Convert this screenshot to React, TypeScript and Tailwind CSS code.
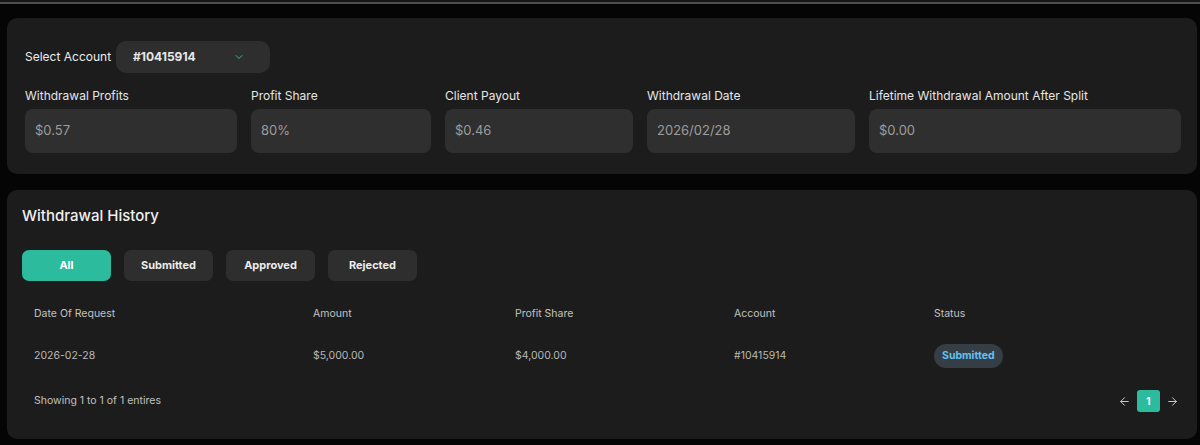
import { ChevronDown, ArrowLeft, ArrowRight } from 'lucide-react';

const fields = [
  { label: 'Withdrawal Profits', value: '$0.57' },
  { label: 'Profit Share', value: '80%' },
  { label: 'Client Payout', value: '$0.46' },
  { label: 'Withdrawal Date', value: '2026/02/28' },
  { label: 'Lifetime Withdrawal Amount After Split', value: '$0.00' },
];

const tabs = ['All', 'Submitted', 'Approved', 'Rejected'];

const columns = ['Date Of Request', 'Amount', 'Profit Share', 'Account', 'Status'];

export default function App() {
  return (
    <div className="min-h-[445px] bg-[#050505] text-white" style={{ fontFamily: 'Inter, "Noto Sans", sans-serif' }}>
      <div className="h-[2px] bg-[#161616]" />
      <div className="h-[2px] bg-[#4e4e4e]" />
      <div className="flex flex-col gap-4 pl-[7px] pr-[3px] pt-[14px]">
        {/* account summary */}
        <section className="rounded-[10px] bg-[#1c1c1c] pl-[18px] pr-4 pt-[23px] pb-[21px]">
          <div className="flex items-center gap-[5px]">
            <span className="text-[12px] text-[#ececec]">Select Account</span>
            <button className="flex h-8 w-[154px] items-center justify-between rounded-[10px] bg-[#2e2e2e] pl-[17px] pr-[25px]">
              <span className="text-[12px] font-bold text-[#e8e8e8]">#10415914</span>
              <ChevronDown className="h-3 w-3 text-[#2dbb9e]" strokeWidth={2} />
            </button>
          </div>
          <div className="mt-[15px] grid grid-cols-[212px_180px_188px_208px_1fr] gap-[14px]">
            {fields.map((f) => (
              <div key={f.label} className="flex flex-col gap-[5px]">
                <span className="text-[12px] leading-[16px] text-[#e6e6e6]">{f.label}</span>
                <div className="flex h-[44px] items-center rounded-[8px] bg-[#2f2f2f] px-[10px] text-[13px] text-[#9c9c9c]">
                  {f.value}
                </div>
              </div>
            ))}
          </div>
        </section>

        {/* history */}
        <section className="rounded-[10px] bg-[#1c1c1c] px-[15px] pt-[15px] pb-[27px]">
          <h2 className="text-[15px] font-medium text-[#f0f0f0]">Withdrawal History</h2>
          <div className="mt-[22px] flex gap-[13px]">
            {tabs.map((t, i) => (
              <button
                key={t}
                className={
                  i === 0
                    ? 'h-[31px] w-[89px] rounded-[7px] bg-[#2dbb9e] text-[11px] font-bold text-white'
                    : 'h-[31px] w-[89px] rounded-[7px] bg-[#2e2e2e] text-[11px] font-bold text-[#ececec]'
                }
              >
                {t}
              </button>
            ))}
          </div>

          <div className="mt-[20px] grid grid-cols-[279px_202px_219px_200px_1fr] px-3 text-[10.5px] text-[#c2c2c2]">
            {columns.map((c) => (
              <div key={c} className="py-[5px]">{c}</div>
            ))}
          </div>
          <div className="mt-[18px] grid grid-cols-[279px_202px_219px_200px_1fr] items-center px-3 text-[10.5px] text-[#b8b8b8]">
            <div>2026-02-28</div>
            <div>$5,000.00</div>
            <div>$4,000.00</div>
            <div>#10415914</div>
            <div>
              <span className="inline-flex h-[24px] items-center rounded-full bg-[#353d45] px-[8px] text-[10.5px] font-bold text-[#62c3f3]">
                Submitted
              </span>
            </div>
          </div>

          <div className="mt-[22px] flex items-center justify-between pl-3 pr-[3px]">
            <span className="text-[10.5px] text-[#c0c0c0]">Showing 1 to 1 of 1 entires</span>
            <div className="flex items-center gap-[6px]">
              <ArrowLeft className="h-[13px] w-[13px] text-[#cfcfcf]" strokeWidth={1.8} />
              <span className="flex h-[22px] w-[23px] items-center justify-center rounded-[3px] bg-[#2dbb9e] text-[10px] font-bold text-white">
                1
              </span>
              <ArrowRight className="h-[13px] w-[13px] text-[#cfcfcf]" strokeWidth={1.8} />
            </div>
          </div>
        </section>
      </div>
    </div>
  );
}
